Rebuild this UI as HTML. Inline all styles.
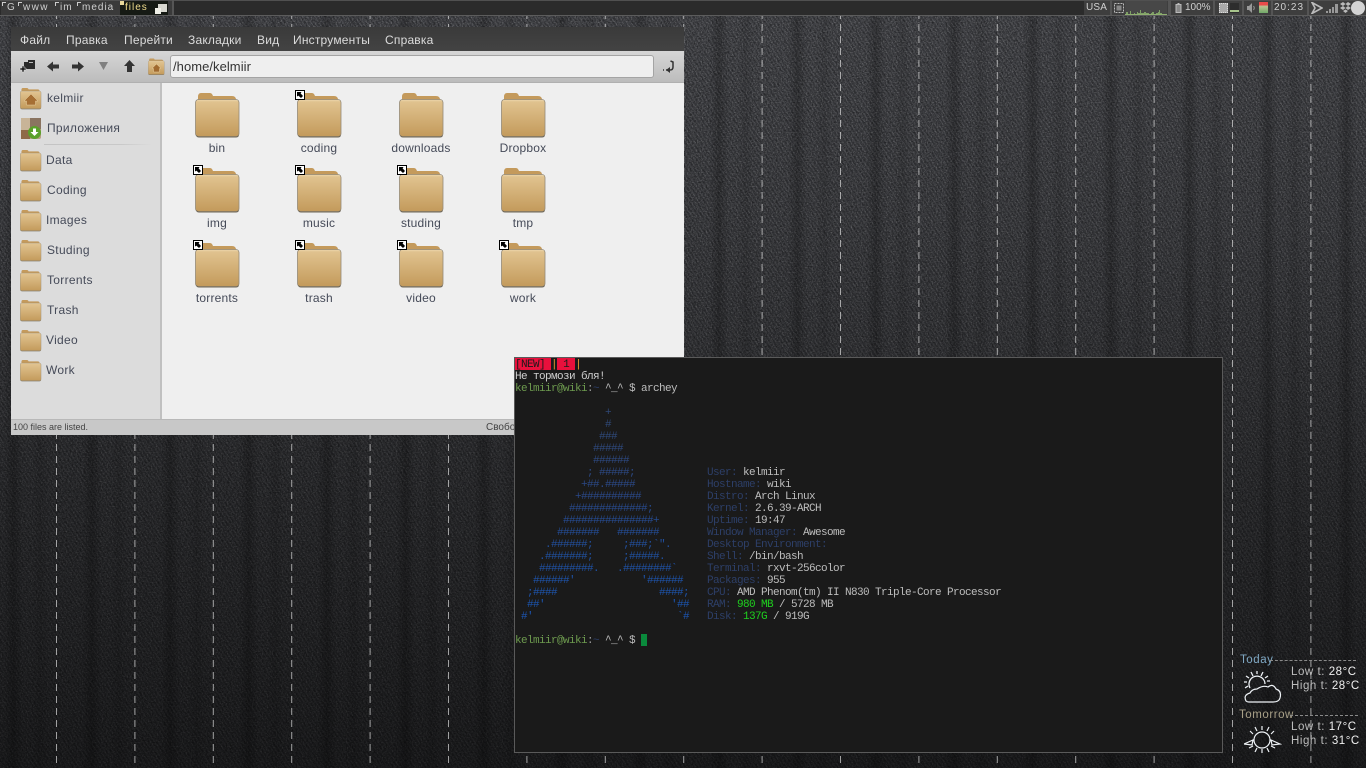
<!DOCTYPE html>
<html><head><meta charset="utf-8"><title>Desktop</title>
<style>
html,body{margin:0;padding:0;width:1366px;height:768px;overflow:hidden;background:#1a1a1c}
*{box-sizing:border-box}
.a{position:absolute}
#wall{position:absolute;left:0;top:0}
.bar{position:absolute;left:0;top:0;width:1366px;height:16px;background:#2b2b2b;border-top:1px solid #505050;border-bottom:1px solid #5c5c5c}
.seg{position:absolute;top:1px;height:14px;background:#3d3d3d}
.bt{position:absolute;top:1px;height:14px;font:10px/14px "Liberation Sans",sans-serif;color:#d0d0d0;letter-spacing:1px;white-space:pre}
.corner{position:absolute;top:2px;width:4px;height:4px;border-left:1px solid #ccc;border-top:1px solid #ccc}
.fm{position:absolute;left:11px;top:27px;width:673px;height:408px;background:#efefef;font-family:"Liberation Sans",sans-serif;overflow:hidden}
.menu{position:absolute;left:0;top:0;width:673px;height:24px;background:linear-gradient(#3a3a3a,#434343)}
.menu span{position:absolute;top:0;line-height:26px;font-size:12px;color:#dcdcdc;letter-spacing:.2px;white-space:pre}
.tool{position:absolute;left:0;top:24px;width:673px;height:32px;background:linear-gradient(#d6d6d6,#bcbcbc);border-bottom:1px solid #b0b0b0}
.path{position:absolute;left:159px;top:4px;width:484px;height:23px;background:#efefef;border:1px solid #a4a4a4;border-radius:3px;font-size:13px;line-height:21px;color:#333;padding-left:2px;letter-spacing:.05px}
.side{position:absolute;left:0;top:56px;width:151px;height:336px;background:#dcdcdc;border-right:2px solid #c0c0c0}
.status{position:absolute;left:0;top:392px;width:673px;height:16px;background:#c8c8c8;border-top:1px solid #b8b8b8;font-size:9px;line-height:15px;color:#444;padding-left:2px}
.sl{position:absolute;font-size:12px;line-height:14px;color:#454a58;letter-spacing:.3px;white-space:pre}
.fl{position:absolute;width:102px;text-align:center;font-size:12px;line-height:14px;color:#454a58;letter-spacing:.2px}
.term{position:absolute;left:514px;top:357px;width:709px;height:396px;background:#1a1a1a;border:1px solid #5a5a5a;overflow:hidden}
pre{margin:0;position:absolute;font:11px/12px "Liberation Mono",monospace;letter-spacing:-.6px;color:#bdbdbd;white-space:pre}
pre span{font:inherit}
.art span{display:block;height:12px}
.l{color:#2d3f68}
.g{color:#1fd11f}
.p{color:#6d9a4e}
.w{position:absolute;font:11.5px/14px "Liberation Sans",sans-serif;color:#bcbcbc;letter-spacing:.55px;white-space:pre}
.w b{font-weight:normal;color:#f0f0f0}
</style></head>
<body>
<svg id="wall" width="1366" height="768" xmlns="http://www.w3.org/2000/svg">
<defs>
<pattern id="tw" width="4" height="6" patternUnits="userSpaceOnUse">
<rect width="4" height="6" fill="#36373b"/><path d="M-2 -3 6 9M-6 -3 2 9M2 -3 10 9" stroke="#45464a" stroke-width="1.4" fill="none"/>
</pattern>
<pattern id="st" x="56" width="78.4" height="12" patternUnits="userSpaceOnUse">
<rect x="0" y="0" width="1" height="7" fill="#dcdcdc"/>
</pattern>
<linearGradient id="bg" x1="0" y1="0" x2="1" y2="0">
<stop offset="0" stop-color="#000" stop-opacity="0"/>
<stop offset=".12" stop-color="#000" stop-opacity=".22"/>
<stop offset=".24" stop-color="#000" stop-opacity="0"/>
<stop offset=".36" stop-color="#000" stop-opacity="0"/>
<stop offset=".46" stop-color="#000" stop-opacity=".1"/>
<stop offset=".56" stop-color="#000" stop-opacity="0"/>
<stop offset="1" stop-color="#000" stop-opacity="0"/>
</linearGradient>
<pattern id="bd" x="4" width="78.4" height="10" patternUnits="userSpaceOnUse">
<rect width="78.4" height="10" fill="url(#bg)"/>
</pattern>
<linearGradient id="vg" x1="0" y1="0" x2="0" y2="1">
<stop offset="0" stop-color="#000" stop-opacity=".0"/>
<stop offset=".3" stop-color="#000" stop-opacity=".15"/>
<stop offset=".6" stop-color="#000" stop-opacity=".38"/>
<stop offset="1" stop-color="#000" stop-opacity=".62"/>
</linearGradient>
<filter id="nz" x="0" y="0" width="100%" height="100%"><feTurbulence type="fractalNoise" baseFrequency=".8" numOctaves="2" seed="4"/><feColorMatrix values="0 0 0 0 .7 0 0 0 0 .7 0 0 0 0 .7 0 0 0 1.6 -.75"/></filter>
<filter id="nd" x="0" y="0" width="100%" height="100%"><feTurbulence type="fractalNoise" baseFrequency=".5" numOctaves="2" seed="9"/><feColorMatrix values="0 0 0 0 0 0 0 0 0 0 0 0 0 0 0 0 0 0 1.6 -.7"/></filter>
</defs>
<rect width="1366" height="768" fill="url(#tw)"/>
<rect width="1366" height="768" filter="url(#nd)" opacity=".5"/>
<rect width="1366" height="768" filter="url(#nz)" opacity=".5"/>
<rect width="1366" height="768" fill="url(#bd)"/>
<rect width="1366" height="768" fill="url(#vg)"/>
<rect width="1366" height="768" fill="url(#st)" opacity=".7"/>
</svg>

<svg width="0" height="0" style="position:absolute" xmlns="http://www.w3.org/2000/svg">
<defs>
<linearGradient id="fb" x1="0" y1="0" x2="0" y2="1"><stop offset="0" stop-color="#e2c592"/><stop offset="1" stop-color="#c39a5b"/></linearGradient>
<symbol id="folder" viewBox="0 0 46 46">
<path d="M3 4Q3 0 6 0H15Q17 0 18 3H37Q41 3 41 7V10H3Z" fill="#c49a5c"/>
<rect x=".5" y="6.5" width="43.5" height="37" rx="3" fill="url(#fb)" stroke="#948a78" stroke-width=".8"/>
<path d="M1.5 42.5Q2 44 4 44H41Q43 44 43.5 42.5" fill="none" stroke="#6e6656" stroke-width="1"/>
<rect x="2" y="7.2" width="41" height="1" fill="#efdcb8" opacity=".6"/>
</symbol>
<symbol id="emblem" viewBox="0 0 10 10">
<rect x=".5" y=".5" width="9" height="9" fill="#fff" stroke="#000"/>
<path d="M2 2H6.5L5.6 3.4 8 6 6 8 3.4 5.6 2 6.5Z" fill="#000"/>
</symbol>
</defs>
</svg>

<div class="bar"></div>
<div class="seg" style="left:1px;width:172px;background:#3a3a3a"></div>
<div class="seg" style="left:120px;width:48px;background:#161a14"></div>
<div class="bt" style="left:7px;color:#ccc">G</div>
<div class="corner" style="left:2px"></div>
<div class="corner" style="left:18px"></div>
<div class="bt" style="left:23px;letter-spacing:1.4px">www</div>
<div class="corner" style="left:55px"></div>
<div class="bt" style="left:60px">im</div>
<div class="corner" style="left:77px"></div>
<div class="bt" style="left:82px">media</div>
<div class="a" style="left:120px;top:1px;width:4px;height:4px;background:#e8d89c"></div>
<div class="bt" style="left:125px;color:#f0dc8c">files</div>
<div class="a" style="left:158px;top:4px;width:9px;height:8px;background:#d8d8d0"></div>
<div class="a" style="left:155px;top:8px;width:6px;height:6px;background:#efefe6"></div>
<div class="a" style="left:172px;top:0;width:2px;height:15px;background:#555"></div>

<div class="seg" style="left:1084px;width:282px;background:#3e3e3e"></div>
<div class="bt" style="left:1086px;letter-spacing:.2px">USA</div>
<div class="a" style="left:1110px;top:0;width:2px;height:15px;background:#555"></div>
<svg class="a" style="left:1114px;top:3px" width="10" height="10"><rect x=".5" y=".5" width="9" height="9" fill="none" stroke="#bbb" stroke-dasharray="2 1"/><rect x="2.5" y="2.5" width="5" height="5" fill="#888"/></svg>
<svg class="a" style="left:1125px;top:1px" width="42" height="14"><rect width="42" height="14" fill="#474747"/><path d="M0 14V13H1V11H3V13H5V10H6V13H9V12H10V13H12V11H13V12H15V9H16V12H19V11H21V12H24V13H26V12H27V11H29V13H31V12H33V11H34V9H35V12H37V13H42V14Z" fill="#7fa066"/><rect y="13" width="42" height="1" fill="#8fb070"/></svg>
<div class="a" style="left:1168px;top:0;width:3px;height:15px;background:#555"></div>
<svg class="a" style="left:1175px;top:3px" width="8" height="10"><rect x="1" y="1.5" width="5" height="8" fill="#888" stroke="#bbb"/><rect x="2.5" y="0" width="2" height="2" fill="#bbb"/></svg>
<div class="bt" style="left:1185px;letter-spacing:0">100%</div>
<div class="a" style="left:1213px;top:0;width:2px;height:15px;background:#555"></div>
<div class="a" style="left:1219px;top:3px;width:9px;height:10px;background:#aaa;border:1px dotted #ddd"></div>
<div class="a" style="left:1230px;top:3px;width:9px;height:10px;background:#2d2d2d"></div>
<div class="a" style="left:1230px;top:10px;width:9px;height:2px;background:#a8c48c"></div>
<div class="a" style="left:1242px;top:0;width:2px;height:15px;background:#555"></div>
<svg class="a" style="left:1247px;top:3px" width="9" height="10"><path d="M0 3H2L5 0V10L2 7H0Z" fill="#999"/><path d="M6.5 3Q8 5 6.5 7" stroke="#999" fill="none"/></svg>
<div class="a" style="left:1259px;top:2px;width:9px;height:11px;background:linear-gradient(#e84a4a 0,#e84a4a 25%,#b8c090 40%,#6fa868 100%)"></div>
<div class="a" style="left:1271px;top:0;width:2px;height:15px;background:#555"></div>
<div class="bt" style="left:1274px">20:23</div>
<div class="a" style="left:1307px;top:0;width:2px;height:15px;background:#555"></div>
<svg class="a" style="left:1311px;top:2px" width="12" height="12"><path d="M1 .5 11 6 1 11.5 4 6Z" fill="none" stroke="#bbb" stroke-width="1.6"/></svg>
<svg class="a" style="left:1326px;top:3px" width="13" height="10"><path d="M0 8H2V10H0ZM3 6H5V10H3ZM6 4H8V10H6ZM9 1H12V10H9Z" fill="#999"/></svg>
<svg class="a" style="left:1340px;top:2px" width="11" height="11"><path d="M3 0 5.5 2 3 4 0 2ZM8 0 11 2 8 4 5.5 2ZM3 4 5.5 6 3 8 0 6ZM8 4 11 6 8 8 5.5 6ZM3 9 5.5 7.5 8 9 5.5 11Z" fill="#bbb"/></svg>
<div class="a" style="left:1351px;top:1px;width:14px;height:14px;border-radius:50%;background:#d4d4d4"></div>

<div class="fm">
 <div class="menu">
  <span style="left:9px">Файл</span><span style="left:55px">Правка</span><span style="left:113px">Перейти</span><span style="left:177px">Закладки</span><span style="left:246px">Вид</span><span style="left:282px">Инструменты</span><span style="left:374px">Справка</span>
 </div>
 <div class="tool">
  <svg class="a" style="left:8px;top:9px" width="17" height="13"><path d="M5 2H9V0H16V9H5Z" fill="#2a2a2a"/><rect x="10" y="2" width="4" height="1" fill="#bbb"/><path d="M3 6V8H1V10H3V12H5V10H7V8H5V6Z" fill="#222" stroke="#ddd" stroke-width=".5"/></svg>
  <svg class="a" style="left:36px;top:9px" width="13" height="13"><path d="M0 6.5 6 1.5V4.5H12V8.5H6V11.5Z" fill="#333"/></svg>
  <svg class="a" style="left:61px;top:9px" width="13" height="13"><path d="M12 6.5 6 1.5V4.5H0V8.5H6V11.5Z" fill="#333"/></svg>
  <svg class="a" style="left:88px;top:11px" width="10" height="10"><path d="M0 0H9L4.5 8Z" fill="#808080"/></svg>
  <svg class="a" style="left:113px;top:9px" width="12" height="13"><path d="M5.5 0 11 6H8V12H3V6H0Z" fill="#333"/></svg>
  <svg class="a" style="left:137px;top:7px" width="17" height="18"><use href="#folder" width="17" height="18"/><path d="M8.5 6 13 10.5H11.5V14H5.5V10.5H4Z" fill="#a06a30" stroke="#e8d0a0" stroke-width=".5"/></svg>
  <div class="path">/home/kelmiir</div>
  <svg class="a" style="left:650px;top:9px" width="15" height="14"><path d="M2 10H3M5 10H9Q12 10 12 7V2L9.5 1" fill="none" stroke="#333" stroke-width="1.5"/><path d="M9 7 5 10 9 13Z" fill="#333"/></svg>
 </div>
 <div class="side">
  <svg class="a" style="left:9px;top:5px" width="22" height="22"><use href="#folder" width="22" height="22"/><path d="M11 6 18 13H15.5V17H6.5V13H4Z" fill="#a66f34" stroke="#e8d0a0" stroke-width=".5"/></svg>
  <svg class="a" style="left:9px;top:34px" width="22" height="23"><rect x="1" y="1" width="20" height="21" rx="2" fill="#b8a084"/><rect x="1" y="1" width="9" height="12" fill="#c8b498"/><rect x="10" y="1" width="11" height="11" fill="#8a7460"/><rect x="1" y="13" width="9" height="9" fill="#8e6a48"/><circle cx="14.5" cy="15.5" r="6.5" fill="#5aa02a"/><path d="M13 11.5H16V15H18.5L14.5 19 10.5 15H13Z" fill="#fff"/></svg>
  <div class="a" style="left:33px;top:61px;width:108px;height:1px;background:linear-gradient(90deg,#c4c4c4,#c8c8c8 70%,#dcdcdc)"></div>
  <span class="sl" style="left:36px;top:8px">kelmiir</span>
  <span class="sl" style="left:36px;top:38px">Приложения</span>
  <svg class="a" style="left:9px;top:67px" width="22" height="22"><use href="#folder" width="22" height="22"/></svg><span class="sl" style="left:35px;top:70px">Data</span>
  <svg class="a" style="left:9px;top:97px" width="22" height="22"><use href="#folder" width="22" height="22"/></svg><span class="sl" style="left:36px;top:100px">Coding</span>
  <svg class="a" style="left:9px;top:127px" width="22" height="22"><use href="#folder" width="22" height="22"/></svg><span class="sl" style="left:35px;top:130px">Images</span>
  <svg class="a" style="left:9px;top:157px" width="22" height="22"><use href="#folder" width="22" height="22"/></svg><span class="sl" style="left:36px;top:160px">Studing</span>
  <svg class="a" style="left:9px;top:187px" width="22" height="22"><use href="#folder" width="22" height="22"/></svg><span class="sl" style="left:36px;top:190px">Torrents</span>
  <svg class="a" style="left:9px;top:217px" width="22" height="22"><use href="#folder" width="22" height="22"/></svg><span class="sl" style="left:36px;top:220px">Trash</span>
  <svg class="a" style="left:9px;top:247px" width="22" height="22"><use href="#folder" width="22" height="22"/></svg><span class="sl" style="left:35px;top:250px">Video</span>
  <svg class="a" style="left:9px;top:277px" width="22" height="22"><use href="#folder" width="22" height="22"/></svg><span class="sl" style="left:35px;top:280px">Work</span>
 </div>

 <svg class="a" style="left:184px;top:66px" width="46" height="46"><use href="#folder" width="46" height="46"/></svg>
 <svg class="a" style="left:286px;top:66px" width="46" height="46"><use href="#folder" width="46" height="46"/></svg>
 <svg class="a" style="left:388px;top:66px" width="46" height="46"><use href="#folder" width="46" height="46"/></svg>
 <svg class="a" style="left:490px;top:66px" width="46" height="46"><use href="#folder" width="46" height="46"/></svg>
 <svg class="a" style="left:184px;top:141px" width="46" height="46"><use href="#folder" width="46" height="46"/></svg>
 <svg class="a" style="left:286px;top:141px" width="46" height="46"><use href="#folder" width="46" height="46"/></svg>
 <svg class="a" style="left:388px;top:141px" width="46" height="46"><use href="#folder" width="46" height="46"/></svg>
 <svg class="a" style="left:490px;top:141px" width="46" height="46"><use href="#folder" width="46" height="46"/></svg>
 <svg class="a" style="left:184px;top:216px" width="46" height="46"><use href="#folder" width="46" height="46"/></svg>
 <svg class="a" style="left:286px;top:216px" width="46" height="46"><use href="#folder" width="46" height="46"/></svg>
 <svg class="a" style="left:388px;top:216px" width="46" height="46"><use href="#folder" width="46" height="46"/></svg>
 <svg class="a" style="left:490px;top:216px" width="46" height="46"><use href="#folder" width="46" height="46"/></svg>

 <svg class="a" style="left:284px;top:63px" width="10" height="10"><use href="#emblem" width="10" height="10"/></svg>
 <svg class="a" style="left:182px;top:138px" width="10" height="10"><use href="#emblem" width="10" height="10"/></svg>
 <svg class="a" style="left:284px;top:138px" width="10" height="10"><use href="#emblem" width="10" height="10"/></svg>
 <svg class="a" style="left:386px;top:138px" width="10" height="10"><use href="#emblem" width="10" height="10"/></svg>
 <svg class="a" style="left:182px;top:213px" width="10" height="10"><use href="#emblem" width="10" height="10"/></svg>
 <svg class="a" style="left:284px;top:213px" width="10" height="10"><use href="#emblem" width="10" height="10"/></svg>
 <svg class="a" style="left:386px;top:213px" width="10" height="10"><use href="#emblem" width="10" height="10"/></svg>
 <svg class="a" style="left:488px;top:213px" width="10" height="10"><use href="#emblem" width="10" height="10"/></svg>

 <div class="fl" style="left:155px;top:114px">bin</div>
 <div class="fl" style="left:257px;top:114px">coding</div>
 <div class="fl" style="left:359px;top:114px">downloads</div>
 <div class="fl" style="left:461px;top:114px">Dropbox</div>
 <div class="fl" style="left:155px;top:189px">img</div>
 <div class="fl" style="left:257px;top:189px">music</div>
 <div class="fl" style="left:359px;top:189px">studing</div>
 <div class="fl" style="left:461px;top:189px">tmp</div>
 <div class="fl" style="left:155px;top:264px">torrents</div>
 <div class="fl" style="left:257px;top:264px">trash</div>
 <div class="fl" style="left:359px;top:264px">video</div>
 <div class="fl" style="left:461px;top:264px">work</div>

 <div class="status">100 files are listed.<span class="a" style="left:475px;top:0;font-size:10px">Свободно</span></div>
</div>

<div class="term">
 <div class="a" style="left:0;top:0;width:36px;height:12px;background:#e8103c"></div>
 <div class="a" style="left:42px;top:0;width:18px;height:12px;background:#e8103c"></div>
 <pre style="left:0;top:1px"><span style="color:#1a1a1a">[NEW]</span> <span style="color:#e89a30">|</span> <span style="color:#1a1a1a">1</span> <span style="color:#e89a30">|</span>
<span style="color:#cfcfcf">Не тормози бля!</span>
<span class="p">kelmiir@wiki</span><span style="color:#999">:</span><span class="l">~</span> ^_^ $ archey</pre>
 <pre class="art" style="left:0;top:49px"><span style="color:#2f4876">               +</span><span style="color:#2f4877">               #</span><span style="color:#2e4879">              ###</span><span style="color:#2e487c">             #####</span><span style="color:#2d487f">             ######</span><span style="color:#2c4882">            ; #####;</span><span style="color:#2b4885">           +##.#####</span><span style="color:#2a4888">          +##########</span><span style="color:#284a8c">         #############;</span><span style="color:#264b90">        ###############+</span><span style="color:#244c95">       #######   #######</span><span style="color:#224e9a">     .######;     ;###;`".</span><span style="color:#20509f">    .#######;     ;#####.</span><span style="color:#1f51a3">    #########.   .########`</span><span style="color:#1e52a7">   ######'           '######</span><span style="color:#1d53aa">  ;####                 ####;</span><span style="color:#1c54ad">  ##'                     '##</span><span style="color:#1c54b0"> #'                        `#</span></pre>
 <pre style="left:192px;top:109px"><span class="l">User:</span> kelmiir
<span class="l">Hostname:</span> wiki
<span class="l">Distro:</span> Arch Linux
<span class="l">Kernel:</span> 2.6.39-ARCH
<span class="l">Uptime:</span> 19:47
<span class="l">Window Manager:</span> Awesome
<span class="l">Desktop Environment:</span>
<span class="l">Shell:</span> /bin/bash
<span class="l">Terminal:</span> rxvt-256color
<span class="l">Packages:</span> 955
<span class="l">CPU:</span> AMD Phenom(tm) II N830 Triple-Core Processor
<span class="l">RAM:</span> <span class="g">980 MB</span> / 5728 MB
<span class="l">Disk:</span> <span class="g">137G</span> / 919G</pre>
 <pre style="left:0;top:277px"><span class="p">kelmiir@wiki</span><span style="color:#999">:</span><span class="l">~</span> ^_^ $</pre>
 <div class="a" style="left:126px;top:276px;width:6px;height:12px;background:#0a8a3c"></div>
</div>

<div class="w" style="left:1240px;top:653px;color:#7fa8c4">Today</div>
<div class="a" style="left:1270px;top:660px;width:86px;border-top:1px dashed #8a8a8a"></div>
<div class="w" style="left:1291px;top:665px">Low t: <b>28°C</b></div>
<div class="w" style="left:1291px;top:679px">High t: <b>28°C</b></div>
<svg class="a" style="left:1243px;top:671px" width="40" height="34" fill="none" stroke="#eef2f6"><path d="M3 30Q0 24 7 22 9 18 14 18 20 14 25 16 30 12 33 18 39 20 37 27 36 31 30 31H6Q4 31 3 30Z" stroke-width="1.2"/><path d="M7 17A8 8 0 1 1 22 13" stroke-width="1.3"/><path d="M14 0V3M8 1 10 5M20 1 18 5M3 5 6 7M25 5 22 7M1 11H4M27 10H24M2 17 5 15" stroke-width="1.3"/></svg>
<div class="w" style="left:1239px;top:708px;color:#a8a088">Tomorrow</div>
<div class="a" style="left:1290px;top:715px;width:68px;border-top:1px dashed #8a8a8a"></div>
<div class="w" style="left:1291px;top:720px">Low t: <b>17°C</b></div>
<div class="w" style="left:1291px;top:734px">High t: <b>31°C</b></div>
<svg class="a" style="left:1244px;top:726px" width="38" height="28" fill="none" stroke="#eef2f6" stroke-width="1.2"><circle cx="18" cy="14" r="8"/><path d="M18 0V4M11 1 13 5M25 1 23 5M6 5 9 8M30 5 27 8M11 26 13 22M25 26 23 22M18 27V23M5 22 9 20M31 22 27 20M0 18 9 14 8 19ZM36 18 27 14 28 19Z"/></svg>
</body></html>
